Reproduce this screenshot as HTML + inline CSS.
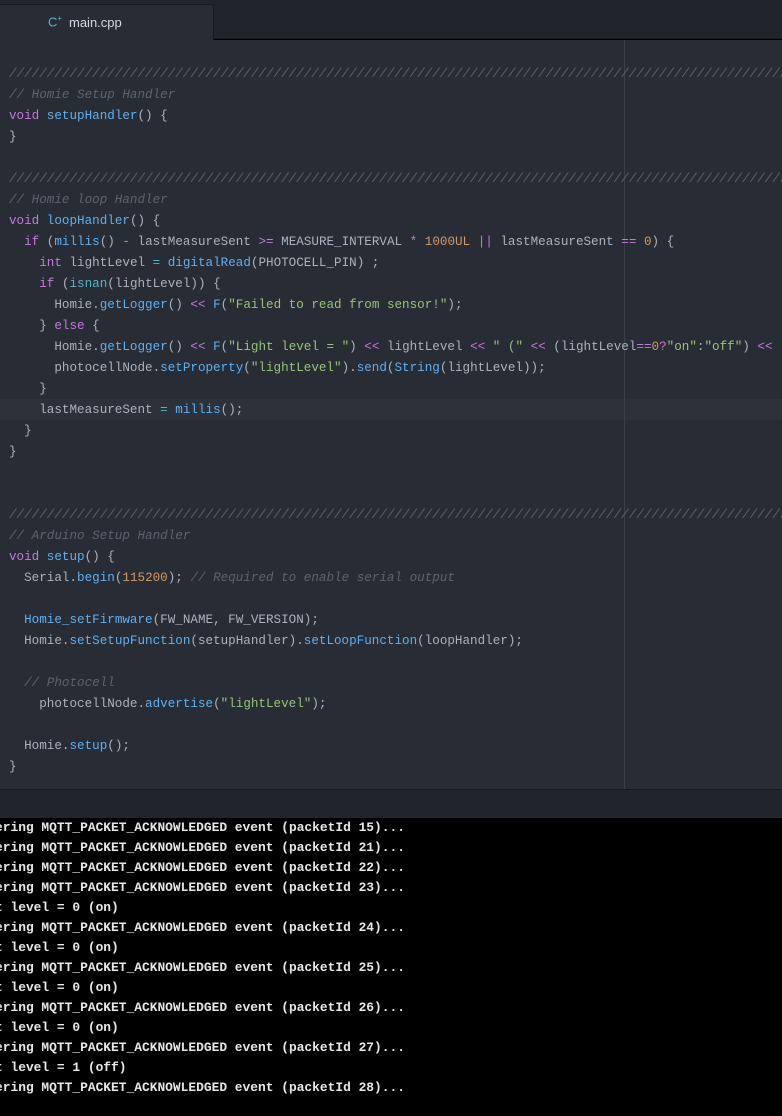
<!DOCTYPE html>
<html><head><meta charset="utf-8"><style>
*{margin:0;padding:0;box-sizing:border-box}
body{width:782px;height:1116px;overflow:hidden;background:#000;position:relative}
.tabbar{position:absolute;left:0;top:0;width:782px;height:39px;background:#21252b;border-bottom:1px solid #181a1f}
.tab{position:absolute;left:0;top:4px;width:214px;height:36px;background:#282c34;border-right:1px solid #181a1f;border-top:1px solid #181a1f;border-top-right-radius:3px}
.tab .ic{position:absolute;left:48px;top:9px;color:#56b6c2;font:13px "Liberation Sans",sans-serif}
.tab .ic sup{font-size:8px}
.tab .nm{position:absolute;left:69px;top:10px;color:#d7dae0;font:13px "Liberation Sans",sans-serif}
.editor{position:absolute;left:0;top:40px;width:782px;height:749px;background:#282c34;overflow:hidden}
.guide{position:absolute;left:624px;top:0;width:1px;height:749px;background:#3b4048}
.hl{position:absolute;left:0;top:359px;width:782px;height:21px;background:#2c313a}
pre{position:absolute;left:9px;top:24px;font:12.6px/21px "Liberation Mono",monospace;color:#abb2bf;white-space:pre}
.k{color:#c678dd}.f{color:#61afef}.s{color:#98c379}.n{color:#d19a66}.c{color:#5c6370;font-style:italic}.y{color:#56b6c2}
.panel{position:absolute;left:0;top:789px;width:782px;height:29px;background:#21252b;border-top:1px solid #181a1f}
.term{position:absolute;left:-5px;top:818px;font:bold 12.9px/20px "Liberation Mono",monospace;color:#e8e8e8;white-space:pre}
</style></head><body>
<div class="tabbar"><div class="tab"><span class="ic">C<sup>+</sup></span><span class="nm">main.cpp</span></div></div>
<div class="editor"><div class="hl"></div><div class="guide"></div>
<pre><span class="c">//////////////////////////////////////////////////////////////////////////////////////////////////////////////</span>
<span class="c">// Homie Setup Handler</span>
<span class="k">void</span> <span class="f">setupHandler</span>() {
}

<span class="c">//////////////////////////////////////////////////////////////////////////////////////////////////////////////</span>
<span class="c">// Homie loop Handler</span>
<span class="k">void</span> <span class="f">loopHandler</span>() {
  <span class="k">if</span> (<span class="f">millis</span>() <span class="k">-</span> lastMeasureSent <span class="k">&gt;=</span> MEASURE_INTERVAL <span class="k">*</span> <span class="n">1000UL</span> <span class="k">||</span> lastMeasureSent <span class="k">==</span> <span class="n">0</span>) {
    <span class="k">int</span> lightLevel <span class="y">=</span> <span class="f">digitalRead</span>(PHOTOCELL_PIN) ;
    <span class="k">if</span> (<span class="y">isnan</span>(lightLevel)) {
      Homie.<span class="f">getLogger</span>() <span class="k">&lt;&lt;</span> <span class="f">F</span>(<span class="s">"Failed to read from sensor!"</span>);
    } <span class="k">else</span> {
      Homie.<span class="f">getLogger</span>() <span class="k">&lt;&lt;</span> <span class="f">F</span>(<span class="s">"Light level = "</span>) <span class="k">&lt;&lt;</span> lightLevel <span class="k">&lt;&lt;</span> <span class="s">" ("</span> <span class="k">&lt;&lt;</span> (lightLevel<span class="k">==</span><span class="n">0</span><span class="k">?</span><span class="s">"on"</span>:<span class="s">"off"</span>) <span class="k">&lt;&lt;</span>
      photocellNode.<span class="f">setProperty</span>(<span class="s">"lightLevel"</span>).<span class="f">send</span>(<span class="f">String</span>(lightLevel));
    }
    lastMeasureSent <span class="y">=</span> <span class="f">millis</span>();
  }
}


<span class="c">//////////////////////////////////////////////////////////////////////////////////////////////////////////////</span>
<span class="c">// Arduino Setup Handler</span>
<span class="k">void</span> <span class="f">setup</span>() {
  Serial.<span class="f">begin</span>(<span class="n">115200</span>); <span class="c">// Required to enable serial output</span>

  <span class="f">Homie_setFirmware</span>(FW_NAME, FW_VERSION);
  Homie.<span class="f">setSetupFunction</span>(setupHandler).<span class="f">setLoopFunction</span>(loopHandler);

  <span class="c">// Photocell</span>
    photocellNode.<span class="f">advertise</span>(<span class="s">"lightLevel"</span>);

  Homie.<span class="f">setup</span>();
}</pre></div>
<div class="panel"></div>
<div class="term">ering MQTT_PACKET_ACKNOWLEDGED event (packetId 15)...
ering MQTT_PACKET_ACKNOWLEDGED event (packetId 21)...
ering MQTT_PACKET_ACKNOWLEDGED event (packetId 22)...
ering MQTT_PACKET_ACKNOWLEDGED event (packetId 23)...
t level = 0 (on)
ering MQTT_PACKET_ACKNOWLEDGED event (packetId 24)...
t level = 0 (on)
ering MQTT_PACKET_ACKNOWLEDGED event (packetId 25)...
t level = 0 (on)
ering MQTT_PACKET_ACKNOWLEDGED event (packetId 26)...
t level = 0 (on)
ering MQTT_PACKET_ACKNOWLEDGED event (packetId 27)...
t level = 1 (off)
ering MQTT_PACKET_ACKNOWLEDGED event (packetId 28)...</div>
</body></html>
